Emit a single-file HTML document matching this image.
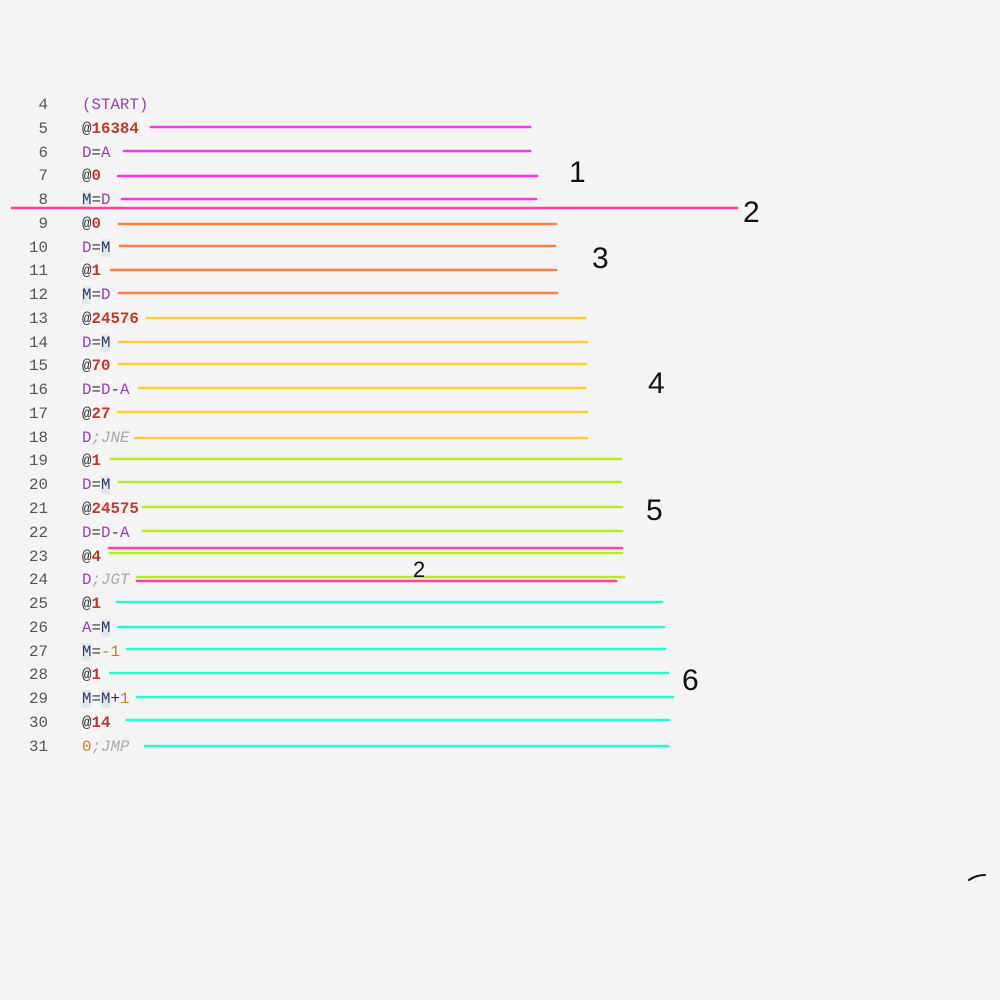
<!DOCTYPE html>
<html><head><meta charset="utf-8"><style>
html,body{margin:0;padding:0;background:#f4f4f4;width:1000px;height:1000px;overflow:hidden}
.code{position:absolute;left:0;top:94px;font-family:"Liberation Mono",monospace;font-size:15.8px;line-height:23.78px;color:#333}
.l{position:relative;height:23.78px;white-space:pre}
.n{position:absolute;left:0;width:48px;text-align:right;color:#555}
.c{position:absolute;left:82px}
.r{color:#c0392b;font-weight:bold}
.p{color:#9b3fb5}
.m{color:#2c3e6a;background:#e4e8ea}
.g{color:#aaa;font-style:italic}
.o{color:#c97a2a}
svg{position:absolute;left:0;top:0}
</style></head><body>
<div class="code">
<div class="l"><span class="n">4</span><span class="c p">(START)</span></div>
<div class="l"><span class="n">5</span><span class="c">@<span class="r">16384</span></span></div>
<div class="l"><span class="n">6</span><span class="c"><span class="p">D</span>=<span class="p">A</span></span></div>
<div class="l"><span class="n">7</span><span class="c">@<span class="r">0</span></span></div>
<div class="l"><span class="n">8</span><span class="c"><span class="m">M</span>=<span class="p">D</span></span></div>
<div class="l"><span class="n">9</span><span class="c">@<span class="r">0</span></span></div>
<div class="l"><span class="n">10</span><span class="c"><span class="p">D</span>=<span class="m">M</span></span></div>
<div class="l"><span class="n">11</span><span class="c">@<span class="r">1</span></span></div>
<div class="l"><span class="n">12</span><span class="c"><span class="m">M</span>=<span class="p">D</span></span></div>
<div class="l"><span class="n">13</span><span class="c">@<span class="r">24576</span></span></div>
<div class="l"><span class="n">14</span><span class="c"><span class="p">D</span>=<span class="m">M</span></span></div>
<div class="l"><span class="n">15</span><span class="c">@<span class="r">70</span></span></div>
<div class="l"><span class="n">16</span><span class="c"><span class="p">D</span>=<span class="p">D</span>-<span class="p">A</span></span></div>
<div class="l"><span class="n">17</span><span class="c">@<span class="r">27</span></span></div>
<div class="l"><span class="n">18</span><span class="c"><span class="p">D</span><span class="g">;JNE</span></span></div>
<div class="l"><span class="n">19</span><span class="c">@<span class="r">1</span></span></div>
<div class="l"><span class="n">20</span><span class="c"><span class="p">D</span>=<span class="m">M</span></span></div>
<div class="l"><span class="n">21</span><span class="c">@<span class="r">24575</span></span></div>
<div class="l"><span class="n">22</span><span class="c"><span class="p">D</span>=<span class="p">D</span>-<span class="p">A</span></span></div>
<div class="l"><span class="n">23</span><span class="c">@<span class="r">4</span></span></div>
<div class="l"><span class="n">24</span><span class="c"><span class="p">D</span><span class="g">;JGT</span></span></div>
<div class="l"><span class="n">25</span><span class="c">@<span class="r">1</span></span></div>
<div class="l"><span class="n">26</span><span class="c"><span class="p">A</span>=<span class="m">M</span></span></div>
<div class="l"><span class="n">27</span><span class="c"><span class="m">M</span>=<span class="o">-1</span></span></div>
<div class="l"><span class="n">28</span><span class="c">@<span class="r">1</span></span></div>
<div class="l"><span class="n">29</span><span class="c"><span class="m">M</span>=<span class="m">M</span>+<span class="o">1</span></span></div>
<div class="l"><span class="n">30</span><span class="c">@<span class="r">14</span></span></div>
<div class="l"><span class="n">31</span><span class="c"><span class="o">0</span><span class="g">;JMP</span></span></div>
</div>
<svg width="1000" height="1000" stroke-width="2.6" stroke-linecap="round">
<g stroke="#ff33ee">
<line x1="151" y1="127" x2="530" y2="127"/><line x1="124" y1="151" x2="530" y2="151"/>
<line x1="118" y1="176" x2="537" y2="176"/><line x1="122" y1="199" x2="536" y2="199"/></g>
<line x1="12" y1="208" x2="737" y2="208" stroke="#ff4499"/>
<g stroke="#ff7f3f">
<line x1="119" y1="224" x2="556" y2="224"/><line x1="120" y1="246" x2="555" y2="246"/>
<line x1="111" y1="270" x2="556" y2="270"/><line x1="119" y1="293" x2="557" y2="293"/></g>
<g stroke="#ffcc33">
<line x1="147" y1="318" x2="585" y2="318"/><line x1="119" y1="342" x2="587" y2="342"/>
<line x1="119" y1="364" x2="586" y2="364"/><line x1="139" y1="388" x2="585" y2="388"/>
<line x1="118" y1="412" x2="587" y2="412"/><line x1="135" y1="438" x2="587" y2="438"/></g>
<g stroke="#bbee22">
<line x1="111" y1="459" x2="621" y2="459"/><line x1="119" y1="482" x2="621" y2="482"/>
<line x1="143" y1="507" x2="622" y2="507"/><line x1="143" y1="531" x2="622" y2="531"/>
<line x1="110" y1="553" x2="622" y2="553"/><line x1="137" y1="577" x2="624" y2="577"/></g>
<g stroke="#ff4499"><line x1="109" y1="548" x2="622" y2="548"/><line x1="137" y1="581" x2="616" y2="581"/></g>
<g stroke="#22ffcc">
<line x1="117" y1="602" x2="662" y2="602"/><line x1="118" y1="627" x2="664" y2="627"/>
<line x1="127" y1="649" x2="665" y2="649"/><line x1="110" y1="673" x2="668" y2="673"/>
<line x1="137" y1="697" x2="673" y2="697"/><line x1="127" y1="720" x2="669" y2="720"/>
<line x1="145" y1="746" x2="668" y2="746"/></g>
<g font-family="Liberation Sans,sans-serif" font-size="30" fill="#111">
<text x="569" y="182">1</text><text x="743" y="222">2</text><text x="592" y="268">3</text>
<text x="648" y="393">4</text><text x="646" y="520">5</text><text x="682" y="690">6</text>
<text x="413" y="577" font-size="22">2</text></g>
<path d="M969 880 Q976 875 985 875" stroke="#111" fill="none" stroke-width="2"/>
</svg>
</body></html>
